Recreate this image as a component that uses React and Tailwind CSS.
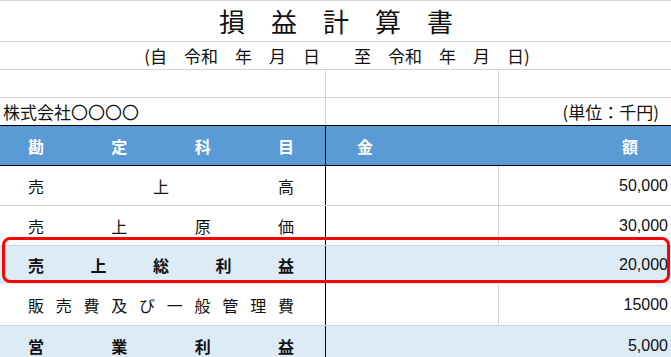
import React from 'react';

const jp = { fontFamily: '"Noto Sans CJK JP", "Noto Sans", sans-serif' };
const num = { fontFamily: '"Liberation Sans", Arial, sans-serif' };

const rows = [
  { label: ['売', '上', '高'], value: '50,000', h: 'h-[40px]' },
  { label: ['売', '上', '原', '価'], value: '30,000', h: 'h-[40px]' },
  { label: ['売', '上', '総', '利', '益'], value: '20,000', h: 'h-[38px]', bold: true, shaded: true },
  { label: ['販', '売', '費', '及', 'び', '一', '般', '管', '理', '費'], value: '15000', h: 'h-[42px]' },
  { label: ['営', '業', '利', '益'], value: '5,000', h: 'h-[40px]', bold: true, shaded: true },
];

const Spread = ({ chars, className = '' }) => (
  <div className={`flex items-center justify-between ${className}`}>
    {chars.map((c, i) => (
      <span key={i}>{c}</span>
    ))}
  </div>
);

const App = () => {
  return (
    <div className="relative w-[671px] h-[357px] overflow-hidden bg-white text-[#111]" style={jp}>
      {/* title */}
      <div className="h-[42px] border-y border-[#d4d4d4] flex items-center justify-center text-[26px] leading-none pl-[1px]">
        損　益　計　算　書
      </div>
      <div className="h-[28px] border-b border-[#d4d4d4] flex items-center justify-center text-[17px] leading-none pl-[3px]">
        (自　令和　年　月　日　　至　令和　年　月　日)
      </div>

      {/* blank + company rows */}
      <div className="grid grid-cols-[326px_173px_1fr] h-[28px] border-b border-[#d4d4d4]">
        <div className="border-r border-[#d4d4d4]" />
        <div className="border-r border-[#d4d4d4]" />
        <div />
      </div>
      <div className="grid grid-cols-[326px_173px_1fr] h-[27px] text-[17px] leading-none">
        <div className="border-r border-[#d4d4d4] flex items-center pl-[3px]">株式会社〇〇〇〇</div>
        <div className="border-r border-[#d4d4d4]" />
        <div className="flex items-center justify-end pr-[12px]">(単位：千円)</div>
      </div>

      {/* header */}
      <div className="grid grid-cols-[326px_1fr] h-[41px] border-y border-black bg-[#5b9bd5] text-white font-bold text-[16px] leading-none">
        <Spread chars={['勘', '定', '科', '目']} className="border-r border-black pl-[28px] pr-[31px]" />
        <Spread chars={['金', '額']} className="pl-[31px] pr-[33px]" />
      </div>

      {/* body */}
      {rows.map((r, i) => (
        <div
          key={i}
          className={`grid grid-cols-[326px_173px_1fr] ${r.h} text-[16px] leading-none ${
            r.shaded ? 'bg-[#ddebf7]' : 'border-b border-[#d4d4d4]'
          } ${r.bold ? 'font-bold' : ''}`}
        >
          <Spread chars={r.label} className="border-r border-black pl-[28px] pr-[31px]" />
          <div className={r.shaded ? '' : 'border-r border-[#d4d4d4]'} />
          <div className="flex items-center justify-end pr-[3px] font-normal" style={num}>
            {r.value}
          </div>
        </div>
      ))}

      {/* red highlight */}
      <div className="absolute left-[2px] top-[237px] w-[668px] h-[46px] border-[3px] border-[#ff0000] rounded-[8px] pointer-events-none" />
    </div>
  );
};

export default App;
